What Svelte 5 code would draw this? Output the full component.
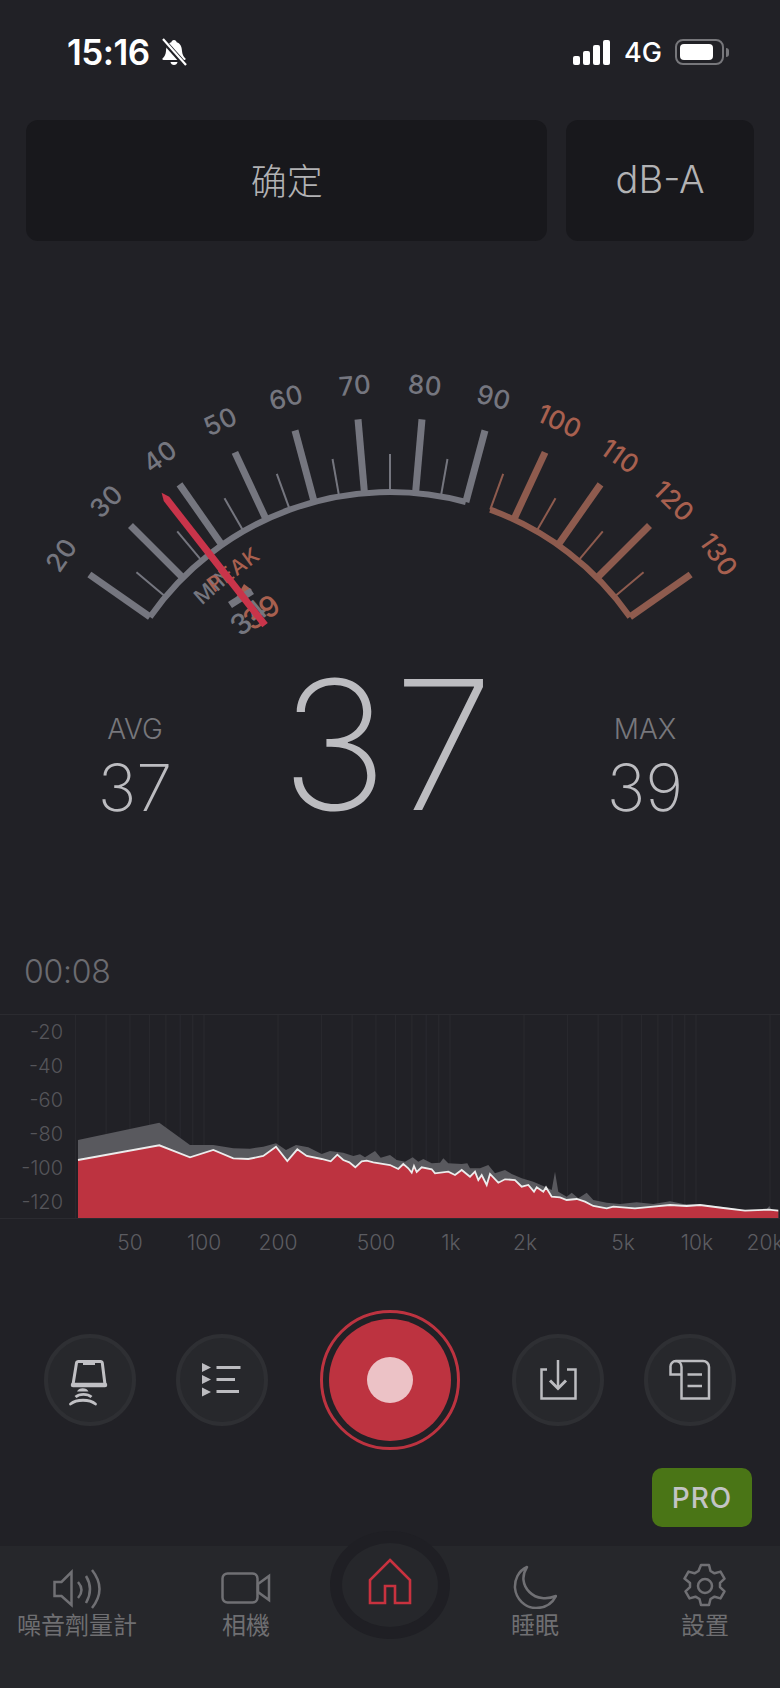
<script>
  const cx = 390;
  const cy = 785;
  const R = 293;
  const gray = '#75767f';
  const rust = '#8e5b4e';
  const rad = (d) => (d * Math.PI) / 180;
  const polar = (r, a) => [cx + r * Math.sin(rad(a)), cy - r * Math.cos(rad(a))];
  const ang = (v) => v - 75;

  const arcPath = (a, b) => {
    const [x1, y1] = polar(R, a);
    const [x2, y2] = polar(R, b);
    return `M${x1} ${y1}A${R} ${R} 0 0 1 ${x2} ${y2}`;
  };

  const ticks = [];
  for (let v = 20; v <= 130; v += 5) {
    const major = v % 10 === 0;
    const a = ang(v);
    const [x1, y1] = polar(R, a);
    const [x2, y2] = polar(R + (major ? 74 : 38), a);
    ticks.push({ x1, y1, x2, y2, major, color: v <= 90 ? gray : rust });
  }

  const scale = [];
  for (let v = 20; v <= 130; v += 10) {
    const a = ang(v);
    const [x, y] = polar(401, a);
    scale.push({ v, x, y, a, color: v <= 90 ? gray : '#a8604f' });
  }

  const needle = (() => {
    const a = ang(37);
    const p = (r, off) => {
      const [x, y] = polar(r, a);
      const n = rad(a);
      return `${x + off * Math.cos(n)},${y + off * Math.sin(n)}`;
    };
    return [p(371, 0), p(363, 3.5), p(203, 3.5), p(203, -3.5), p(363, -3.5)].join(' ');
  })();

  const labelAt = (r, a) => {
    const [x, y] = polar(r, a);
    return `translate(${x} ${y}) rotate(${a})`;
  };

  // spectrum traces, read off the reference as page x / y
  const low = (pts) => pts.map(([x, y]) => [x / 3, y / 3]);
  const high = (pts) => pts.map(([x, y]) => [390 + x / 3, y / 3]);

  const whiteLine = [
    ...low([[234,480],[478,436],[570,472],[640,450],[700,475],[745,477],[790,468],[828,440],[862,483],[892,448],[920,468],[965,477],[992,484],[1012,464],[1030,480],[1048,487],[1066,502],[1085,484],[1100,482],[1120,487]]),
    ...high([[0,495],[25,507],[40,492],[55,505],[65,518],[72,498],[80,516],[95,502],[125,508],[135,520],[175,515],[195,525],[215,510],[240,530],[255,515],[265,540],[275,525],[290,555],[300,522],[325,548],[345,538],[375,540],[395,560],[415,555],[432,575],[440,562],[460,575],[468,562],[485,590],[510,592],[530,600],[560,597],[585,605],[610,618],[650,625],[670,620],[735,625],[790,620],[840,615],[890,618],[930,615],[1000,624],[1065,632],[1135,629],[1165,632]])
  ];
  const grayLine = [
    ...low([[234,420],[478,368],[570,435],[640,435],[700,445],[750,446],[790,440],[828,430],[858,450],[888,435],[925,442],[965,462],[990,453],[1030,458],[1060,468],[1080,463],[1095,472],[1125,453],[1142,473]]),
    ...high([[0,465],[20,480],[45,485],[68,472],[85,485],[100,477],[125,490],[150,488],[160,475],[175,490],[215,492],[232,490],[240,505],[270,505],[295,495],[315,520],[345,510],[365,522],[395,535],[430,545],[465,560],[485,570],[495,515],[505,575],[530,590],[545,578],[565,595],[590,578],[610,600],[650,608],[690,612],[740,607],[790,612],[840,604],[880,612],[930,613],[1030,625],[1065,632],[1130,628],[1138,618],[1145,630],[1165,632]])
  ];
  const plotBottom = 219;
  const pts = (list) => list.map(([x, y]) => `${x.toFixed(1)},${(y - 15).toFixed(1)}`).join(' ');
  const area = (list) =>
    `${pts(list)} ${list[list.length - 1][0].toFixed(1)},${plotBottom - 15} ${list[0][0].toFixed(1)},${plotBottom - 15}`;

  const freqs = [30, 40, 50, 60, 70, 80, 90, 100, 200, 300, 400, 500, 600, 700, 800, 900, 1000, 2000, 3000, 4000, 5000, 6000, 7000, 8000, 9000, 10000, 20000];
  const gridX = freqs.map((f) => 204 + 246 * Math.log10(f / 100));

  const dbLabels = ['-20', '-40', '-60', '-80', '-100', '-120'];
  const freqLabels = [
    { t: '50', x: 130 },
    { t: '100', x: 204 },
    { t: '200', x: 278 },
    { t: '500', x: 376 },
    { t: '1k', x: 451 },
    { t: '2k', x: 525 },
    { t: '5k', x: 623 },
    { t: '10k', x: 697 },
    { t: '20k', x: 765 }
  ];
</script>

<div class="page">
  <header class="status">
    <div class="status-left">
      <span class="clock">15:16</span>
      <svg class="bell" width="30" height="30" viewBox="0 0 30 30">
        <path d="M15 3c-1.5 0-2.5 1-2.700 2.300C8.500 6.500 7.200 10 7 14c-.2 3.500-1.500 5.500-3.300 7.300-.7.800-.2 1.700.8 1.700h21c1 0 1.500-.9.800-1.700-1.800-1.800-3.100-3.800-3.300-7.300-.2-4-1.500-7.500-5.300-8.700C17.500 4 16.500 3 15 3z" fill="#fff" />
        <path d="M11.500 25h7c-.3 1.800-1.700 3-3.500 3s-3.200-1.200-3.500-3z" fill="#fff" />
        <path d="M3 2l24 27" stroke="#212126" stroke-width="5" />
        <path d="M4 2l23 26" stroke="#fff" stroke-width="2.200" />
      </svg>
    </div>
    <div class="status-right">
      <div class="signal"><i></i><i></i><i></i><i></i></div>
      <span class="net">4G</span>
      <div class="battery"><div class="battery-fill"></div></div>
      <div class="battery-cap"></div>
    </div>
  </header>

  <div class="top-buttons">
    <button class="top-btn wide">确定</button>
    <button class="top-btn">dB-A</button>
  </div>

  <svg class="gauge" width="780" height="410" viewBox="0 241 780 410">
    <path d={arcPath(-55, 15)} fill="none" stroke={gray} stroke-width="6" />
    <path d={arcPath(20, 55)} fill="none" stroke={rust} stroke-width="6" />
    {#each ticks as t}
      <line x1={t.x1} y1={t.y1} x2={t.x2} y2={t.y2} stroke={t.color} stroke-width={t.major ? 7 : 2} />
    {/each}
    {#each scale as s}
      <text class="scale-num" x="0" y="0" transform="translate({s.x} {s.y}) rotate({s.a})" dy="9" fill={s.color}>{s.v}</text>
    {/each}

    <text class="mark-label" transform={labelAt(266, -41.5)} dy="7" fill={gray}>MIN</text>
    <text class="mark-num" transform={labelAt(219, -40)} dy="10" fill={gray}>34</text>
    <polygon points="244,584 236,598 252,590" fill="#a8604f" />
    <polygon points="228,602 250,588 254,594 232,608" fill={gray} />
    <text class="mark-label" transform={labelAt(266, -36)} dy="7" fill="#a8604f">PEAK</text>
    <text class="mark-num" transform={labelAt(215, -36.5)} dy="10" fill="#a8604f">39</text>
    <polygon points={needle} fill="#c9344a" />
  </svg>

  <section class="readout">
    <div class="stat">
      <span class="stat-label">AVG</span>
      <span class="stat-value">37</span>
    </div>
    <div class="current">37</div>
    <div class="stat">
      <span class="stat-label">MAX</span>
      <span class="stat-value">39</span>
    </div>
  </section>

  <div class="timer">00:08</div>

  <section class="chart">
    <div class="db-scale">
      {#each dbLabels as d}
        <span>{d}</span>
      {/each}
    </div>
    <svg class="plot" width="780" height="203" viewBox="0 0 780 203">
      {#each gridX as x}
        <line x1={x} y1="0" x2={x} y2="204" stroke="#2a2a2f" stroke-width="1" />
      {/each}
      <polygon points={area(grayLine)} fill="#59595e" />
      <polygon points={area(whiteLine)} fill="#bd3340" />
      <polyline points={pts(whiteLine)} fill="none" stroke="#ececec" stroke-width="1.800" />
    </svg>
  </section>
  <div class="freq-scale">
    {#each freqLabels as f}
      <span class="freq" style="left: {f.x}px">{f.t}</span>
    {/each}
  </div>

  <section class="controls">
    <div class="control-group">
      <button class="round" aria-label="calibrate">
        <svg width="44" height="52" viewBox="0 0 44 52" fill="none" stroke="#c0c0c4">
          <path d="M10.500 7.500h22c1 0 1.600.5 1.800 1.500L37 30.500H5L8.500 9c.2-1 1-1.500 2-1.500z" stroke-width="3" stroke-linejoin="round" />
          <path d="M5 31h32" stroke-width="4.500" stroke-linecap="round" />
          <path d="M15 9.500h12" stroke-width="3" />
          <path d="M9 37.500c1.500-4.500 10-4.500 11.500 0z" fill="#c0c0c4" stroke="none" />
          <path d="M7.500 43c4-3.500 12-3.500 16 0" stroke-width="2.800" />
          <path d="M2.500 50c6-5 19-5 25 0" stroke-width="2.800" stroke-linecap="round" />
        </svg>
      </button>
      <button class="round" aria-label="list">
        <svg width="42" height="38" viewBox="0 0 42 38" fill="#bcbcc0">
          <polygon points="1,2 10,6.500 1,11" />
          <polygon points="1,14 10,18.500 1,23" />
          <polygon points="1,26.500 10,31 1,35.500" />
          <rect x="15.500" y="5" width="24" height="3" />
          <rect x="15.500" y="17" width="18.500" height="3" />
          <rect x="15.500" y="29" width="22.500" height="3" />
        </svg>
      </button>
    </div>

    <button class="record" aria-label="record">
      <span class="record-fill"><span class="record-dot"></span></span>
    </button>

    <div class="control-group">
      <button class="round" aria-label="save">
        <svg width="38" height="42" viewBox="0 0 38 42" fill="none" stroke="#bcbcc0" stroke-width="2.500">
          <path d="M8 10.500H2.500v29h34v-29H28" />
          <path d="M19 1v28" />
          <path d="M11 21.500l8 8 8-8" stroke-width="3" />
        </svg>
      </button>
      <button class="round" aria-label="report">
        <svg width="42" height="42" viewBox="0 0 42 42" fill="none" stroke="#bcbcc0" stroke-width="2.500">
          <path d="M7 2H34a6 6 0 0 1 6 6V39.500H12.500V8a6 6 0 0 0-5.500-6 5.500 5.500 0 0 0-5.500 6V15.500H12.500" />
          <path d="M18.500 15.500h14.500M18.500 27h14.500" />
        </svg>
      </button>
    </div>
  </section>

  <div class="pro-row">
    <button class="pro">PRO</button>
  </div>

  <nav class="tabs">
    <div class="home-ring">
      <svg width="44" height="47" viewBox="0 0 44 47" fill="none" stroke="#c8323f" stroke-width="2.600">
        <path d="M22 2 L42 22 V45 H27 V28 H17 V45 H2 V22 Z" />
      </svg>
    </div>
    <div class="tab">
      <svg width="48" height="40" viewBox="0 0 48 40" fill="none" stroke="#707074" stroke-width="2.500">
        <path d="M1.500 13H8.500L18.500 3v33L8.500 27H1.500z" />
        <path d="M25 13Q32 21 25 29" />
        <path d="M33 7Q41 20 33 34" />
        <path d="M39 1Q54 20 39 39" />
      </svg>
      <span>噪音劑量計</span>
    </div>
    <div class="tab">
      <svg class="cam" width="50" height="32" viewBox="0 0 50 32" fill="none" stroke="#707074" stroke-width="2.500">
        <rect x="1.500" y="1.500" width="35" height="29" rx="5" />
        <path d="M37 12l11-8v24l-11-8z" />
      </svg>
      <span>相機</span>
    </div>
    <div class="tab-gap"></div>
    <div class="tab">
      <svg width="44" height="44" viewBox="0 0 44 44" fill="none" stroke="#707074" stroke-width="2.500">
        <path d="M14 2C5 6 1.500 15 2 23 3 34 12 43 23 43 32 43 39 39 43 31 38 33 33 33.500 29 33 19 32 11.500 24 10.500 15 10 10 11.500 6 14 2z" stroke-linejoin="round" />
      </svg>
      <span>睡眠</span>
    </div>
    <div class="tab settings">
      <svg width="44" height="46" viewBox="0 0 44 46" fill="none" stroke="#707074" stroke-width="2.500">
        <path d="M18 2h8l1.500 6 4 2.300 6-1.700 4 7-4.500 4.300v4.200l4.500 4.300-4 7-6-1.700-4 2.300-1.500 6h-8l-1.500-6-4-2.300-6 1.700-4-7 4.500-4.300v-4.200L1.500 15.600l4-7 6 1.700 4-2.300z" stroke-linejoin="round" />
        <circle cx="22" cy="23" r="7" />
      </svg>
      <span>設置</span>
    </div>
  </nav>
</div>

<style>
  :global(body) {
    background: #212126;
  }

  .page {
    position: relative;
    width: 780px;
    height: 1688px;
    overflow: hidden;
    background: #212126;
    font-family: Inter, 'Noto Sans CJK TC', sans-serif;
  }

  button {
    border: none;
    padding: 0;
    font: inherit;
  }

  .status {
    height: 104px;
    box-sizing: border-box;
    padding: 36px 51px 0 67px;
    display: flex;
    justify-content: space-between;
    color: #fff;
  }

  .status-left {
    display: flex;
    gap: 9px;
    height: 32px;
    align-items: center;
  }

  .clock {
    font-size: 35px;
    font-weight: 600;
    letter-spacing: -0.5px;
  }

  .bell {
    display: block;
  }

  .status-right {
    display: flex;
    align-items: center;
    height: 32px;
  }

  .signal {
    display: flex;
    align-items: flex-end;
    gap: 3px;
    height: 25px;
    margin-right: 14px;
  }

  .signal i {
    width: 7px;
    border-radius: 2px;
    background: #fff;
  }

  .signal i:nth-child(1) { height: 9px; }
  .signal i:nth-child(2) { height: 14px; }
  .signal i:nth-child(3) { height: 20px; }
  .signal i:nth-child(4) { height: 25px; }

  .net {
    font-size: 27px;
    font-weight: 500;
    width: 38px;
    margin-right: 13px;
  }

  .battery {
    box-sizing: border-box;
    width: 49px;
    height: 26px;
    padding: 3px;
    border: 2px solid #77777b;
    border-radius: 8px;
  }

  .battery-fill {
    width: 33px;
    height: 100%;
    border-radius: 4px;
    background: #fff;
  }

  .battery-cap {
    width: 3px;
    height: 9px;
    margin-left: 2px;
    border-radius: 0 3px 3px 0;
    background: #77777b;
  }

  .top-buttons {
    display: flex;
    gap: 19px;
    padding: 16px 26px 0;
  }

  .top-btn {
    width: 188px;
    height: 121px;
    padding-bottom: 4px;
    border-radius: 12px;
    background: #18181c;
    color: #b2b2b4;
    font-size: 38px;
    font-weight: 300;
  }

  .top-btn.wide {
    width: 522px;
    font-family: 'Noto Sans CJK SC', sans-serif;
    font-size: 36px;
    font-weight: 300;
  }

  .gauge {
    display: block;
  }

  .scale-num {
    font-size: 26px;
    font-weight: 500;
    letter-spacing: 0.5px;
    text-anchor: middle;
  }

  .mark-label {
    font-size: 21px;
    font-weight: 500;
    letter-spacing: 1px;
    text-anchor: middle;
  }

  .mark-num {
    font-size: 29px;
    font-weight: 500;
    letter-spacing: 1px;
    text-anchor: middle;
  }

  .readout {
    display: grid;
    grid-template-columns: 270px 240px 270px;
    height: 290px;
    margin-top: 0;
    color: #bcbcc0;
  }

  .stat {
    display: flex;
    flex-direction: column;
    align-items: center;
    padding-top: 61px;
  }

  .stat-label {
    font-size: 28px;
    font-weight: 300;
    color: #77777c;
    line-height: 34px;
  }

  .stat-value {
    margin-top: 7px;
    font-size: 65px;
    font-weight: 200;
    line-height: 70px;
  }

  .current {
    margin: -6px -20px 0;
    font-size: 180px;
    font-weight: 200;
    line-height: 200px;
    text-align: center;
    letter-spacing: 6px;
  }

  .timer {
    height: 54px;
    margin-top: 4px;
    padding: 0 0 0 24px;
    font-size: 32px;
    font-weight: 300;
    line-height: 54px;
    letter-spacing: -0.3px;
    color: #6b6b70;
  }

  .chart {
    position: relative;
    box-sizing: border-box;
    height: 205px;
    margin-top: 15px;
    border-top: 1px solid #2b2b30;
    border-bottom: 1px solid #2b2b30;
  }

  .plot {
    display: block;
  }

  .db-scale {
    position: absolute;
    right: 717px;
    top: 0;
    display: flex;
    flex-direction: column;
    align-items: flex-end;
    color: #55555a;
    font-size: 20px;
    font-weight: 300;
    line-height: 34px;
  }

  .freq-scale {
    position: relative;
    height: 46px;
  }

  .freq {
    position: absolute;
    top: 11px;
    transform: translateX(-50%);
    color: #5c5c61;
    font-size: 21px;
    font-weight: 300;
  }

  .controls {
    display: flex;
    justify-content: space-between;
    align-items: center;
    padding: 45px 44px 0;
  }

  .control-group {
    display: flex;
    gap: 40px;
  }

  .round {
    box-sizing: border-box;
    width: 92px;
    height: 92px;
    display: flex;
    align-items: center;
    justify-content: center;
    border: 4px solid #2e2f33;
    border-radius: 50%;
    background: #27282c;
  }

  .record {
    box-sizing: border-box;
    width: 140px;
    height: 140px;
    display: flex;
    align-items: center;
    justify-content: center;
    border: 3px solid #bd3340;
    border-radius: 50%;
    background: transparent;
  }

  .record-fill {
    width: 122px;
    height: 122px;
    display: flex;
    align-items: center;
    justify-content: center;
    border-radius: 50%;
    background: #bd3340;
  }

  .record-dot {
    width: 46px;
    height: 46px;
    border-radius: 50%;
    background: #ecc2c6;
  }

  .pro-row {
    display: flex;
    justify-content: flex-end;
    padding: 18px 28px 0 0;
  }

  .pro {
    width: 100px;
    height: 59px;
    border-radius: 10px;
    background: #4a7516;
    color: #c3c4c5;
    font-size: 28px;
    font-weight: 500;
    letter-spacing: 1px;
  }

  .tabs {
    position: absolute;
    left: 0;
    right: 0;
    bottom: 0;
    height: 142px;
    display: grid;
    grid-template-columns: 154px 184px 112px 170px 160px;
    background: #26272b;
  }

  .home-ring {
    position: absolute;
    left: 330px;
    top: -15px;
    box-sizing: border-box;
    width: 120px;
    height: 108px;
    padding-bottom: 8px;
    display: flex;
    align-items: center;
    justify-content: center;
    border: 12px solid #1f1f24;
    border-radius: 50%;
    background: #26272b;
  }

  .tab {
    display: flex;
    flex-direction: column;
    align-items: center;
    justify-content: flex-end;
    height: 95px;
    color: #6f6f72;
    font-size: 24px;
    line-height: 30px;
    gap: 2px;
  }

  .tab.settings {
    padding-left: 10px;
  }

  .cam {
    margin-bottom: 5px;
  }
</style>
